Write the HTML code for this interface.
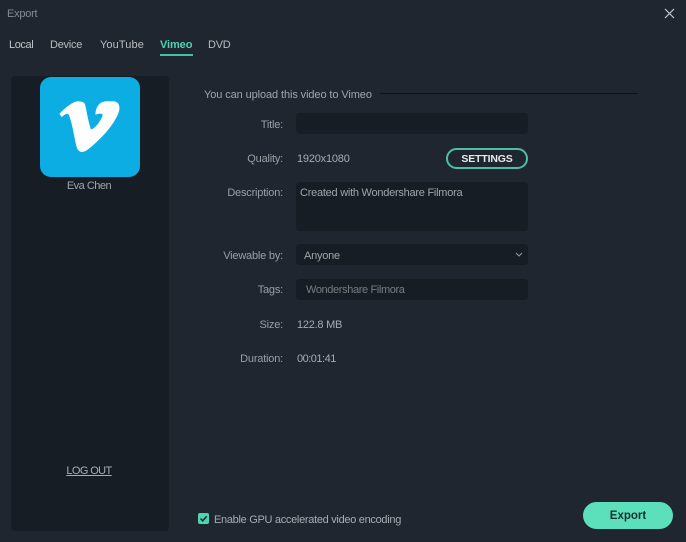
<!DOCTYPE html>
<html><head><meta charset="utf-8">
<style>
html,body{margin:0;padding:0;width:686px;height:542px;overflow:hidden;background:#1f2630}
body{position:relative;font-family:"Liberation Sans",sans-serif;font-size:11px;color:#a8acb1}
.t{position:absolute;white-space:nowrap;line-height:14px;letter-spacing:-.25px}
.r{position:absolute;right:403px;white-space:nowrap;line-height:14px;letter-spacing:-.2px;color:#9a9fa4}
.b{position:absolute;background:#171d25;border-radius:4px}
</style></head><body>
<div class="t" style="left:7px;top:7px;color:#858b91">Export</div>
<svg style="position:absolute;left:662px;top:6px" width="14" height="14"><path d="M3 3L12 12M12 3L3 12" stroke="#c8cbce" stroke-width="1.2" fill="none"/></svg>
<div class="t" style="left:9px;top:38px;color:#c2c5c8;letter-spacing:-.4px">Local</div>
<div class="t" style="left:50px;top:38px;color:#babdc0">Device</div>
<div class="t" style="left:100px;top:38px;color:#babdc0;letter-spacing:.1px">YouTube</div>
<div class="t" style="left:160px;top:38px;color:#4fd3b0;font-weight:bold;letter-spacing:-.1px">Vimeo</div>
<div style="position:absolute;left:160px;top:54px;width:33px;height:2px;background:#3fc4a2"></div>
<div class="t" style="left:208px;top:38px;color:#babdc0">DVD</div>
<div class="b" style="left:11px;top:76px;width:158px;height:455px"></div>
<div style="position:absolute;left:40px;top:77px;width:100px;height:100px;border-radius:11px;background:#0cade3"></div>
<svg style="position:absolute;left:40px;top:77px" width="100" height="100"><path d="M19.3 37C25 31 33 24.3 38.3 24.3C43 24.3 45 26 45.5 29C47 37 49 47 51 52.5C54 52 60 46 62.7 38.3C62.7 36.5 60 36 55.5 37.7C55.5 32 58 24.3 67 24.3L73 24.3C78 24.3 80 28 79.3 33C78 40 70 52 60 61.7C54 67.5 49 72 45 74.3C41 76 38.3 74.3 37 71C34.5 63 33.5 53 30.7 43.3C29.5 38.5 28.5 36.7 27.3 36.7C25.5 36.7 23.5 38.5 21.7 40Z" fill="#fff"/></svg>
<div class="t" style="left:40px;width:98px;text-align:center;top:179px;color:#a0a5aa;letter-spacing:-.5px">Eva Chen</div>
<div class="t" style="left:40px;width:98px;text-align:center;top:464px;color:#aaaeb2;text-decoration:underline;letter-spacing:-.6px">LOG OUT</div>
<div class="t" style="left:204px;top:88px;color:#a0a5aa;letter-spacing:-.1px">You can upload this video to Vimeo</div>
<div style="position:absolute;left:380px;top:93px;width:258px;height:1px;background:#0e1217"></div>
<div class="r" style="top:118px">Title:</div>
<div class="b" style="left:296px;top:113px;width:232px;height:21px"></div>
<div class="r" style="top:152px">Quality:</div>
<div class="t" style="left:297px;top:152px;letter-spacing:-.2px">1920x1080</div>
<div style="position:absolute;left:446px;top:148px;width:78px;height:17px;border:2px solid #4bbfa4;border-radius:11px;text-align:center;font:bold 10.5px/18px 'Liberation Sans',sans-serif;letter-spacing:-.15px;color:#e8eaec">SETTINGS</div>
<div class="r" style="top:186px">Description:</div>
<div class="b" style="left:296px;top:182px;width:232px;height:49px"></div>
<div class="t" style="left:300px;top:186px;color:#a0a5aa">Created with Wondershare Filmora</div>
<div class="r" style="top:249px">Viewable by:</div>
<div class="b" style="left:296px;top:244px;width:232px;height:21px"></div>
<div class="t" style="left:304px;top:249px;color:#a0a5aa">Anyone</div>
<svg style="position:absolute;left:515px;top:252px" width="8" height="6"><path d="M1 1L4 4L7 1" stroke="#8f959b" stroke-width="1.1" fill="none"/></svg>
<div class="r" style="top:283px">Tags:</div>
<div class="b" style="left:296px;top:279px;width:232px;height:21px"></div>
<div class="t" style="left:306px;top:283px;color:#767c82;letter-spacing:-.37px">Wondershare Filmora</div>
<div class="r" style="top:318px">Size:</div>
<div class="t" style="left:297px;top:318px">122.8 MB</div>
<div class="r" style="top:352px">Duration:</div>
<div class="t" style="left:297px;top:352px;letter-spacing:-.5px">00:01:41</div>
<div style="position:absolute;left:198px;top:513px;width:11px;height:11px;background:#4fd3b0;border-radius:2px"></div>
<svg style="position:absolute;left:198px;top:513px" width="11" height="11"><path d="M2.5 5.5L4.7 7.8L8.7 3.3" stroke="#14302e" stroke-width="1.6" fill="none"/></svg>
<div class="t" style="left:214px;top:513px;letter-spacing:-.3px">Enable GPU accelerated video encoding</div>
<div style="position:absolute;left:583px;top:502px;width:90px;height:27px;border-radius:14px;background:#5ce0bb;text-align:center;font:bold 11.5px/28px 'Liberation Sans',sans-serif;color:#14302e">Export</div>
</body></html>
